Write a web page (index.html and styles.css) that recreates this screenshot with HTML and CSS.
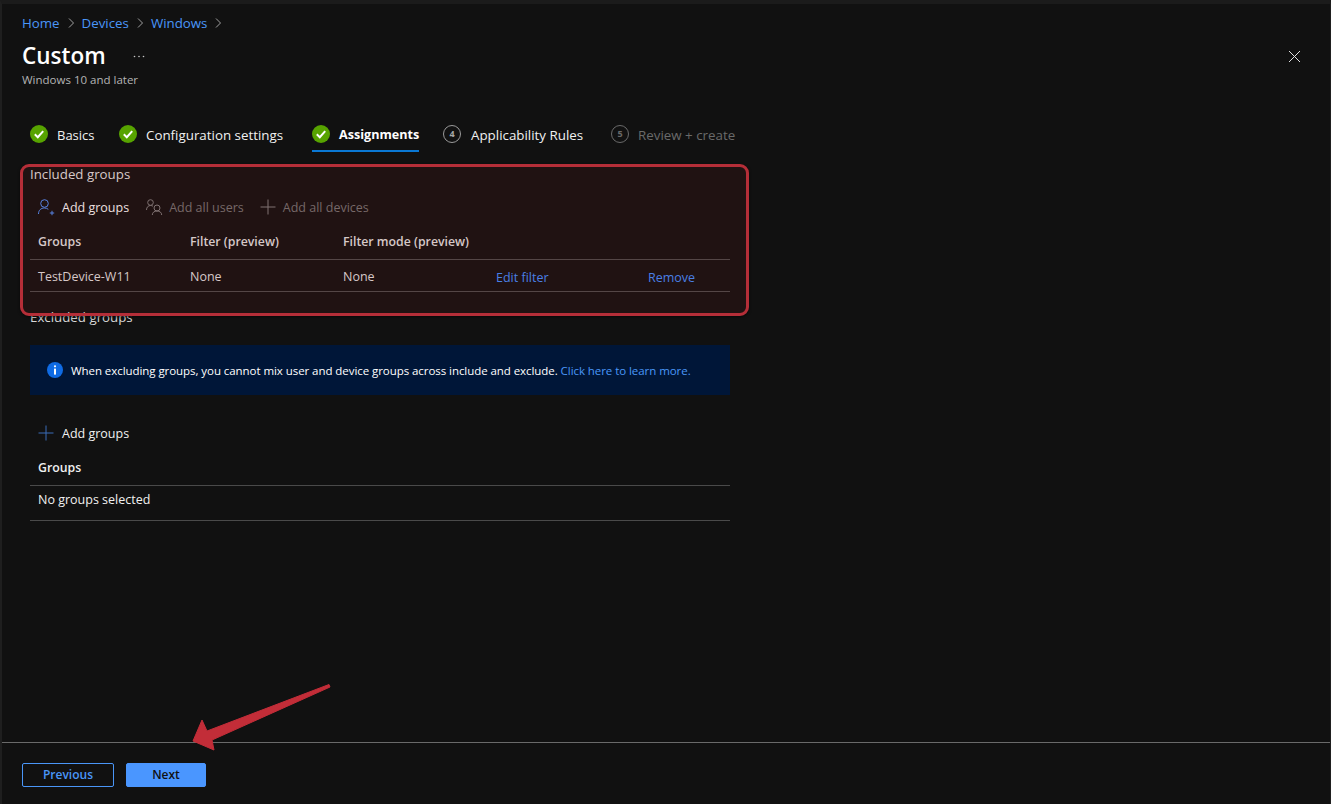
FILE: index.html
```html
<html>

<head>
    <title>Custom</title>
    <link rel="stylesheet" href="styles.css">
</head>

<body>
    <div class="page">
        <div class="main">
            <div class="crumbs">
                <a href="#">Home</a>
                <svg class="crumb-sep" width="6" height="10" viewBox="0 0 6 10"><path d="M1 .5 5.5 5 1 9.500"/></svg>
                <a href="#">Devices</a>
                <svg class="crumb-sep" width="6" height="10" viewBox="0 0 6 10"><path d="M1 .5 5.5 5 1 9.500"/></svg>
                <a href="#">Windows</a>
                <svg class="crumb-sep" width="6" height="10" viewBox="0 0 6 10"><path d="M1 .5 5.5 5 1 9.500"/></svg>
            </div>

            <div class="title-row">
                <h1>Custom</h1>
                <span class="dots">
                    <svg width="12" height="3" viewBox="0 0 12 3"><circle cx="1.500" cy="1.500" r=".8"/><circle cx="6" cy="1.500" r=".8"/><circle cx="10.500" cy="1.500" r=".8"/></svg>
                </span>
                <svg class="close" width="13" height="13" viewBox="0 0 13 13"><path d="M1 1 12 12M12 1 1 12"/></svg>
            </div>
            <div class="subtitle">Windows 10 and later</div>

            <div class="tabs">
                <div class="tab tab-basics">
                    <svg class="check" width="18" height="18" viewBox="0 0 18 18"><circle cx="9" cy="9" r="9"/><path d="M4.800 9.300 7.800 12.200 13.200 6.200"/></svg>
                    <span>Basics</span>
                </div>
                <div class="tab tab-config">
                    <svg class="check" width="18" height="18" viewBox="0 0 18 18"><circle cx="9" cy="9" r="9"/><path d="M4.800 9.300 7.800 12.200 13.200 6.200"/></svg>
                    <span>Configuration settings</span>
                </div>
                <div class="tab tab-assign active">
                    <svg class="check" width="18" height="18" viewBox="0 0 18 18"><circle cx="9" cy="9" r="9"/><path d="M4.800 9.300 7.800 12.200 13.200 6.200"/></svg>
                    <span>Assignments</span>
                </div>
                <div class="tab tab-rules">
                    <span class="step">4</span>
                    <span>Applicability Rules</span>
                </div>
                <div class="tab tab-review disabled">
                    <span class="step">5</span>
                    <span>Review + create</span>
                </div>
            </div>

            <div class="content">
                <div class="label">Included groups</div>
                <div class="toolbar">
                    <div class="tool">
                        <svg class="tool-icon" width="17" height="17" viewBox="0 0 17 17"><g class="blue"><circle cx="6.500" cy="4.500" r="3.800"/><path d="M.5 15c0-3.800 2.500-6 6-6 1.500 0 2.800.5 3.800 1.300M11.800 14h4.400M14 11.800v4.400"/></g></svg>
                        <span>Add groups</span>
                    </div>
                    <div class="tool off">
                        <svg class="tool-icon users" width="17" height="17" viewBox="0 0 17 17"><g class="grey"><circle cx="4.500" cy="3.500" r="2.800"/><path d="M.5 11c0-2.800 1.800-4.500 4-4.500 1 0 1.800.3 2.500.7"/><circle cx="11" cy="9" r="3"/><path d="M6.300 16c0-2.500 2-4 4.700-4s4.700 1.500 4.700 4"/></g></svg>
                        <span>Add all users</span>
                    </div>
                    <div class="tool off">
                        <svg class="tool-icon" width="16" height="16" viewBox="0 0 16 16"><path class="grey" d="M8 .5v15M.5 8h15"/></svg>
                        <span>Add all devices</span>
                    </div>
                </div>

                <div class="grid grid-head">
                    <span>Groups</span>
                    <span>Filter (preview)</span>
                    <span>Filter mode (preview)</span>
                </div>
                <div class="grid grid-row">
                    <span>TestDevice-W11</span>
                    <span>None</span>
                    <span>None</span>
                    <a href="#" class="row-link">Edit filter</a>
                    <a href="#" class="row-link">Remove</a>
                </div>

                <div class="label excluded">Excluded groups</div>
                <div class="banner">
                    <svg width="16" height="16" viewBox="0 0 16 16"><circle cx="8" cy="8" r="8" fill="#0f6be4"/><circle cx="8" cy="4.300" r="1.100" fill="#fff"/><rect x="7" y="6.600" width="2" height="6" fill="#fff"/></svg>
                    <span>When excluding groups, you cannot mix user and device groups across include and exclude. <a href="#">Click here to learn more.</a></span>
                </div>

                <div class="toolbar second">
                    <div class="tool">
                        <svg class="tool-icon" width="16" height="16" viewBox="0 0 16 16"><path class="blue" d="M8 .5v15M.5 8h15"/></svg>
                        <span>Add groups</span>
                    </div>
                </div>
                <div class="grid grid-head single"><span>Groups</span></div>
                <div class="empty">No groups selected</div>
            </div>
        </div>

        <div class="footer">
            <button class="btn btn-prev">Previous</button>
            <button class="btn btn-next">Next</button>
        </div>

        <!-- red callouts drawn on top of the screenshot -->
        <div class="callout"></div>
        <svg class="arrow" width="150" height="72" viewBox="0 0 150 72"><path d="M139 4.500 140 7 22 60 24 70 3 61 12 40 17 51Z"/></svg>
    </div>
</body>

</html>
```

FILE: styles.css
```css
* {
    box-sizing: border-box;
}

body {
    margin: 0;
    background-color: #111111;
    color: #e6e6e6;
    font-family: "Open Sans", "Noto Sans", sans-serif;
    font-size: 12px;
}

a {
    text-decoration: none;
}

.page {
    position: relative;
    display: flex;
    flex-direction: column;
    height: 804px;
    overflow: hidden;
    border-top: 4px solid #1b1b1b;
    border-left: 2px solid #1f1f1f;
    border-right: 1px solid #1f1f1f;
}

.main {
    flex: 1;
    padding-left: 20px;
}

.crumbs {
    display: flex;
    align-items: center;
    height: 16px;
    margin-top: 11px;
    font-size: 13.300px;
}

.crumbs a {
    color: #4a96f8;
}

.crumb-sep {
    margin: 0 8px;
    fill: none;
    stroke: #a0a0a0;
}

.title-row {
    display: flex;
    align-items: center;
    height: 32px;
    margin-top: 9px;
}

h1 {
    margin: 0;
    font-size: 22.500px;
    font-weight: 600;
    color: #ffffff;
    line-height: 32px;
}

.dots {
    display: flex;
    margin-left: 27px;
}

.dots svg {
    fill: #c8c8c8;
}

.close {
    margin-left: auto;
    margin-right: 29px;
    fill: none;
    stroke: #e0e0e0;
}

.subtitle {
    height: 16px;
    line-height: 16px;
    color: #b4b4b4;
    font-size: 11.500px;
}

.tabs {
    display: flex;
    height: 33px;
    margin-top: 31px;
}

.tab {
    display: flex;
    align-items: flex-start;
    gap: 9px;
    height: 33px;
    padding-top: 6px;
    font-size: 13.350px;
    line-height: 20px;
    color: #f0f0f0;
    white-space: nowrap;
}

.tab-basics {
    margin-left: 8px;
    width: 89px;
    font-size: 13px;
}

.tab-config {
    width: 193px;
}

.tab-assign {
    width: 107px;
    margin-right: 24px;
    font-size: 12.600px;
}

.tab-rules {
    width: 168px;
    gap: 10px;
}

.active {
    font-weight: 700;
    color: #ffffff;
    border-bottom: 2px solid #0a78d4;
}

.disabled {
    color: #6a6a6a;
}

.check {
    flex: none;
    margin-top: 0;
}

.check circle {
    fill: #57a300;
}

.check path {
    fill: none;
    stroke: #ffffff;
    stroke-width: 2;
}

.step {
    flex: none;
    width: 18px;
    height: 18px;
    border: 1px solid #9a9a9a;
    border-radius: 50%;
    font-size: 9px;
    font-weight: 700;
    line-height: 16px;
    text-align: center;
    color: #a8a8a8;
}

.disabled .step {
    border-color: #6a6a6a;
    color: #6a6a6a;
}

.content {
    width: 700px;
    margin-left: 8px;
    padding-top: 14px;
}

.label {
    height: 16px;
    line-height: 16px;
    font-size: 13.300px;
    color: #d8d8d8;
}

.toolbar {
    display: flex;
    align-items: center;
    height: 32px;
    margin-top: 9px;
    padding-left: 8px;
    font-size: 12.500px;
    color: #f0f0f0;
}

.toolbar.second {
    margin-top: 22px;
}

.second .tool {
    gap: 8px;
}

.tool {
    display: flex;
    align-items: center;
    gap: 7px;
    margin-right: 16px;
}

.tool-icon {
    flex: none;
    fill: none;
}

.users {
    margin-left: 1px;
    margin-right: -1px;
}

.blue {
    stroke: #4f8cf5;
    fill: none;
}

.grey {
    stroke: #7a7a7a;
    fill: none;
}

.off {
    color: #6f6f6f;
}

.second .blue {
    stroke: #3a6cb8;
}

.grid {
    display: grid;
    grid-template-columns: 152px 153px 153px 152px 1fr;
    padding-left: 8px;
    border-bottom: 1px solid #4a4a4a;
    font-size: 12.500px;
}

.grid-head {
    height: 37px;
    padding-top: 10px;
    font-size: 12.300px;
    font-weight: 600;
    color: #d8d8d8;
}

.grid-row {
    height: 32px;
    padding-top: 8px;
    color: #d8d8d8;
}

.row-link {
    color: #3f88f8;
    margin-top: 1px;
}

.excluded {
    margin-top: 17px;
}

.banner {
    display: flex;
    align-items: center;
    gap: 8px;
    height: 50px;
    margin-top: 20px;
    padding-left: 17px;
    background-color: #001638;
    font-size: 11.500px;
    letter-spacing: -0.06px;
    color: #ffffff;
    white-space: nowrap;
}

.banner a {
    color: #4a96f8;
}

.single {
    color: #f0f0f0;
}

.empty {
    height: 35px;
    padding-top: 5px;
    padding-left: 8px;
    border-bottom: 1px solid #4a4a4a;
    font-size: 12.500px;
    color: #f0f0f0;
}

.footer {
    display: flex;
    gap: 12px;
    height: 62px;
    padding: 20px 0 0 20px;
    border-top: 1px solid #6a6a6a;
}

.btn {
    height: 24px;
    padding-bottom: 3px;
    border-radius: 2px;
    font-family: inherit;
    font-size: 12px;
    font-weight: 600;
}

.btn-prev {
    width: 92px;
    border: 1px solid #4a96f8;
    background-color: transparent;
    color: #4a96f8;
}

.btn-next {
    width: 80px;
    border: 1px solid #4a96ff;
    background-color: #4a96ff;
    color: #111111;
}

.callout {
    position: absolute;
    left: 18px;
    top: 160px;
    width: 729px;
    height: 152px;
    border: 3px solid #b52e38;
    border-radius: 9px;
    background-color: rgba(200, 40, 30, 0.085);
    box-shadow: 0 1px 3px rgba(0, 0, 0, 0.6);
}

.arrow {
    position: absolute;
    left: 188px;
    top: 676px;
}

.arrow path {
    fill: #c22d38;
    stroke: #c22d38;
    stroke-linejoin: round;
}
```
